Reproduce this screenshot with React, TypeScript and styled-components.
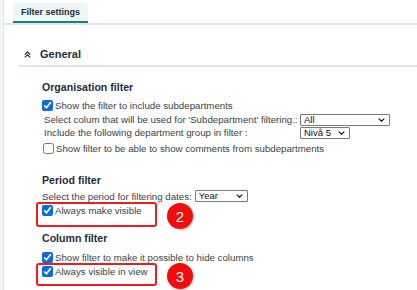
import React from "react";
import styled, { createGlobalStyle } from "styled-components";

const Global = createGlobalStyle`
  html, body { margin: 0; padding: 0; background: #ffffff; }
  body { font-family: "Liberation Sans", Arial, sans-serif; color: #333333; }
`;

const Page = styled.div`
  display: flex;
  width: 417px;
  height: 290px;
  overflow: hidden;
`;

const SideStrip = styled.div`
  width: 3px;
  flex: 0 0 3px;
  background: #f4f5f7;
  border-right: 1px solid #e3e6ea;
`;

const Main = styled.div`
  flex: 1;
  display: flex;
  flex-direction: column;
`;

const TabBar = styled.div`
  display: flex;
  padding: 3px 0 0 9px;
  border-bottom: 2px solid #e1e4e8;
`;

const Tab = styled.div`
  height: 20px;
  width: 75px;
  box-sizing: border-box;
  display: flex;
  align-items: center;
  justify-content: center;
  background: #eef5f5;
  border-radius: 3px 3px 0 0;
  border-bottom: 2px solid #17817d;
  font-size: 9px;
  font-weight: bold;
  color: #1f2d3d;
`;

const Section = styled.div`
  margin: 18px 0 0 15px;
`;

const SectionHeader = styled.div`
  display: flex;
  align-items: center;
  gap: 9px;
  height: 22px;
  padding-left: 5px;
  border-bottom: 2px solid #dfe5ec;
  font-size: 11px;
  font-weight: bold;
  color: #1f2d3d;
`;

const Body = styled.div`
  padding: 13px 0 0 23px;
  display: flex;
  flex-direction: column;
`;

const GroupTitle = styled.div<{ $top?: number; $bottom?: number }>`
  margin-top: ${(p) => p.$top ?? 0}px;
  margin-bottom: ${(p) => p.$bottom ?? 0}px;
  height: 14px;
  display: flex;
  align-items: center;
  font-size: 10.6px;
  font-weight: bold;
  color: #1f2d3d;
`;

const Row = styled.div<{ $h?: number; $indent?: number }>`
  position: relative;
  display: flex;
  align-items: center;
  height: ${(p) => p.$h ?? 14}px;
  font-size: 9.7px;
  color: #3a3f46;
  padding-left: ${(p) => p.$indent ?? 0}px;
  white-space: nowrap;
`;

const OptionGrid = styled.div`
  display: grid;
  grid-template-columns: 256px auto;
  grid-auto-rows: 13px;
  align-items: center;
  padding: 1px 0 1px 2px;
  font-size: 9.7px;
  color: #3a3f46;
  white-space: nowrap;
`;

const Check = styled.input.attrs({ type: "checkbox" })`
  margin: 0 2px 0 0;
  width: 11px;
  height: 11px;
  accent-color: #0a6ce0;
`;

const Label = styled.span``;

const SelectWrap = styled.div<{ $w: number; $left?: number }>`
  position: relative;
  width: ${(p) => p.$w}px;
  height: 12px;
  margin-left: ${(p) => p.$left ?? 0}px;
`;

const Select = styled.select`
  appearance: none;
  display: block;
  width: 100%;
  height: 12px;
  margin: 0;
  padding: 0 0 0 3px;
  border: 1px solid #7a7a7a;
  border-radius: 1px;
  background: #fff;
  font-family: "Liberation Sans", Arial, sans-serif;
  font-size: 9.5px;
  line-height: 10px;
  color: #111;
  box-sizing: border-box;
`;

const Chevron = styled.svg`
  position: absolute;
  right: 5px;
  top: 4px;
  width: 7px;
  height: 4px;
  pointer-events: none;
`;

const Highlight = styled.div<{ $w: number; $h: number }>`
  position: absolute;
  left: -6px;
  top: -1px;
  width: ${(p) => p.$w}px;
  height: ${(p) => p.$h}px;
  border: 2px solid #ec1c24;
  border-radius: 3px;
  box-sizing: border-box;
  pointer-events: none;
`;

const Badge = styled.div<{ $top: number }>`
  position: absolute;
  left: 125px;
  top: ${(p) => p.$top}px;
  width: 26px;
  height: 26px;
  border-radius: 50%;
  background: #f20d0d;
  color: #fff;
  font-size: 15px;
  display: flex;
  align-items: center;
  justify-content: center;
  box-shadow: 1px 1px 2px rgba(0, 0, 0, 0.25);
`;

const DoubleUp = () => (
  <svg width="7" height="7" viewBox="0 0 7 7">
    <path d="M0.8 3.6 L3.5 1 L6.2 3.6 M0.8 6.4 L3.5 3.8 L6.2 6.4" fill="none" stroke="#2a3440" strokeWidth="1.3" />
  </svg>
);

const Dropdown = ({ w, left, value }: { w: number; left?: number; value: string }) => (
  <SelectWrap $w={w} $left={left}>
    <Select defaultValue={value}>
      <option>{value}</option>
    </Select>
    <Chevron viewBox="0 0 7 4">
      <path d="M0.7 0.6 L3.5 3.2 L6.3 0.6" fill="none" stroke="#111" strokeWidth="1.2" />
    </Chevron>
  </SelectWrap>
);

export default function App() {
  return (
    <>
      <Global />
      <Page>
        <SideStrip />
        <Main>
          <TabBar>
            <Tab>Filter settings</Tab>
          </TabBar>
          <Section>
            <SectionHeader>
              <DoubleUp />
              General
            </SectionHeader>
            <Body>
              <GroupTitle $bottom={4}>Organisation filter</GroupTitle>
              <Row>
                <Check defaultChecked />
                <Label>Show the filter to include subdepartments</Label>
              </Row>
              <OptionGrid>
                <Label>Select colum that will be used for 'Subdepartment' filtering.:</Label>
                <Dropdown w={90} value="All" />
                <Label>Include the following department group in filter :</Label>
                <Dropdown w={50} value="Nivå 5" />
              </OptionGrid>
              <Row $h={16} $indent={1}>
                <Check />
                <Label>Show filter to be able to show comments from subdepartments</Label>
              </Row>

              <GroupTitle $top={17} $bottom={2}>Period filter</GroupTitle>
              <Row>
                <Label>Select the period for filtering dates:</Label>
                <Dropdown w={53} left={3} value="Year" />
              </Row>
              <Row>
                <Check defaultChecked />
                <Label>Always make visible</Label>
                <Highlight $w={121} $h={25} />
                <Badge $top={0}>2</Badge>
              </Row>

              <GroupTitle $top={14} $bottom={5}>Column filter</GroupTitle>
              <Row>
                <Check defaultChecked />
                <Label>Show filter to make it possible to hide columns</Label>
              </Row>
              <Row>
                <Check defaultChecked />
                <Label>Always visible in view</Label>
                <Highlight $w={121} $h={23} />
                <Badge $top={-1}>3</Badge>
              </Row>
            </Body>
          </Section>
        </Main>
      </Page>
    </>
  );
}
